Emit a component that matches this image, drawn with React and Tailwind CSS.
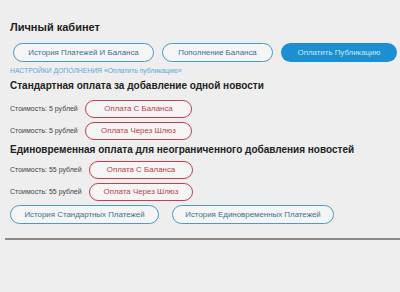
import React from "react";

const blueBtn =
  "h-[19px] rounded-full border-[1.5px] border-[#4b9cc4] bg-[#f5f5f5] text-[7.9px] text-[#3a6f96] flex items-center justify-center";
const redBtn =
  "h-[18px] rounded-full border-[1.5px] border-[#c2404f] bg-[#f5f5f5] text-[7.9px] text-[#c0394b] flex items-center justify-center";

function PayRow({ price, label, left, width }) {
  return (
    <div className="flex items-center">
      <span className={`text-[7px] text-[#444] ${left}`}>Стоимость: {price} рублей</span>
      <button className={`${redBtn} ${width}`}>{label}</button>
    </div>
  );
}

export default function App() {
  return (
    <div
      className="w-[400px] h-[292px] bg-[#eeeeee] overflow-hidden"
      style={{ fontFamily: '"Liberation Sans", Arial, sans-serif' }}
    >
      <div className="pl-[10px] pt-[18px]">
        <h1 className="text-[11px] font-bold text-[#222] leading-[18px]">Личный кабинет</h1>
        <div className="flex mt-[7px] pl-[3px]">
          <button className={`${blueBtn} w-[141px]`}>История Платежей И Баланса</button>
          <button className={`${blueBtn} w-[111px] ml-[8px]`}>Пополнение Баланса</button>
          <button className="h-[19px] w-[116px] ml-[8px] rounded-full bg-[#1b8fd2] text-[7.9px] text-[#cfe8f7] flex items-center justify-center">
            Оплатить Публикацию
          </button>
        </div>
        <p className="mt-[4px] text-[6.8px] text-[#5aa8d4] leading-[10px]">
          НАСТРОЙКИ ДОПОЛНЕНИЯ «Оплатить публикацию»
        </p>
        <h2 className="mt-[3px] text-[10px] font-bold text-[#222] leading-[14px]">
          Стандартная оплата за добавление одной новости
        </h2>
        <div className="mt-[7px] flex flex-col gap-[4px]">
          <PayRow price="5" label="Оплата С Баланса" left="w-[75px]" width="w-[107px]" />
          <PayRow price="5" label="Оплата Через Шлюз" left="w-[75px]" width="w-[107px]" />
        </div>
        <h2 className="mt-[3px] text-[10px] font-bold text-[#222] leading-[14px]">
          Единовременная оплата для неограниченного добавления новостей
        </h2>
        <div className="mt-[4px] flex flex-col gap-[4px]">
          <PayRow price="55" label="Оплата С Баланса" left="w-[79px]" width="w-[104px]" />
          <PayRow price="55" label="Оплата Через Шлюз" left="w-[79px]" width="w-[104px]" />
        </div>
        <div className="flex mt-[4px]">
          <button className={`${blueBtn} h-[17px] w-[149px]`}>История Стандартных Платежей</button>
          <button className={`${blueBtn} h-[17px] w-[162px] ml-[13px]`}>
            История Единовременных Платежей
          </button>
        </div>
      </div>
      <div className="ml-[5px] mt-[14px] h-[2px] bg-[#8a8a8a]" />
    </div>
  );
}
